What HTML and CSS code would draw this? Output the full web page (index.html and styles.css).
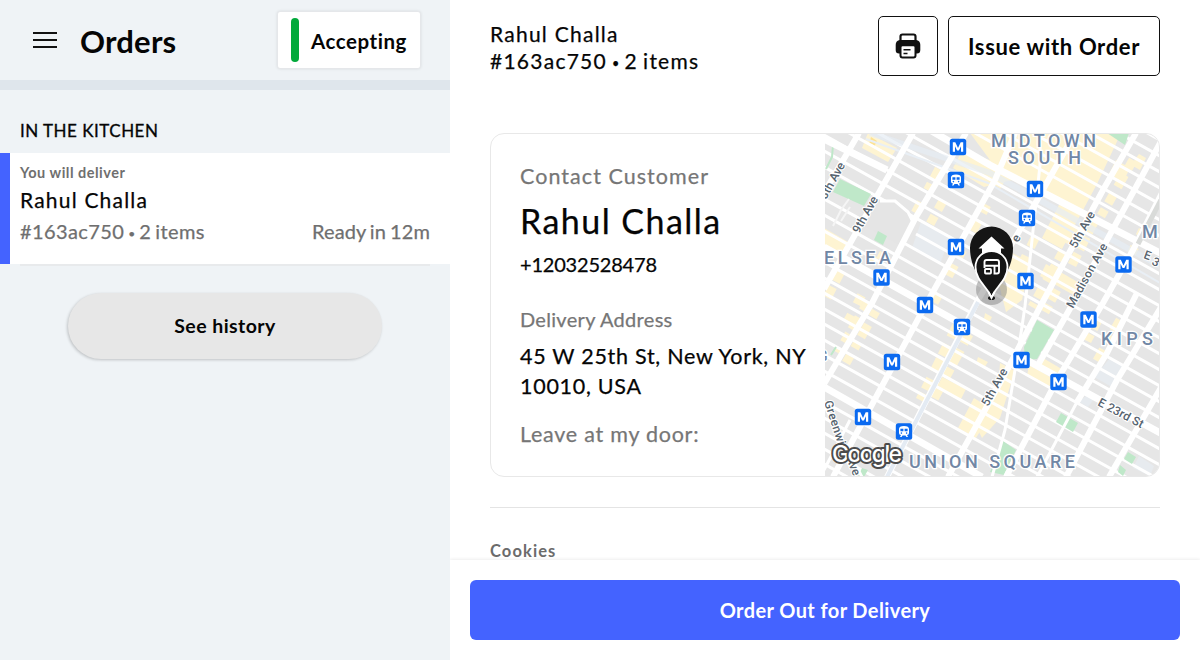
FILE: index.html
```html
<!DOCTYPE html>
<html lang="en">
<head>
<meta charset="utf-8">
<title>Orders</title>
<link rel="stylesheet" href="styles.css">
</head>
<body>
<div class="app">
  <aside class="sidebar">
    <header class="side-head">
      <svg class="menu" width="24" height="18" viewBox="0 0 24 18"><path d="M0 2H24M0 9H24M0 16H24" stroke="#111" stroke-width="2.2"/></svg>
      <h1 class="title">Orders</h1>
      <button class="status"><i class="status-bar"></i><span>Accepting</span></button>
    </header>
    <h2 class="section">IN THE KITCHEN</h2>
    <article class="order">
      <div class="order-body">
        <p class="order-kind">You will deliver</p>
        <p class="order-name">Rahul Challa</p>
        <p class="order-meta"><span class="order-id">#163ac750 <b class="dot">•</b> 2 items</span><span class="order-eta">Ready in 12m</span></p>
      </div>
    </article>
    <button class="history"><span>See history</span></button>
  </aside>
  <main class="detail">
    <div class="scroll">
      <header class="detail-head">
        <div class="who"><p class="who-name">Rahul Challa</p><p class="who-id">#163ac750 <b class="dot">•</b> 2 items</p></div>
        <button class="btn print" aria-label="Print">
          <svg width="26" height="26" viewBox="0 0 26 26"><path d="M5.500 8V3.500Q5.500 1.500 7.500 1.500H18.500Q20.500 1.500 20.500 3.500V8" fill="#fff" stroke="#111" stroke-width="2.200"/><path d="M5 7H21Q25.300 7.500 25.300 12V17Q25.300 20.500 22 20.500H4Q.7 20.500.7 17V12Q.7 7.500 5 7Z" fill="#111"/><rect x="5.500" y="12.300" width="15" height="12.200" rx="2" fill="#fff" stroke="#111" stroke-width="2"/><path d="M8.500 16.800H15.500M8.500 20.500H12.500" stroke="#111" stroke-width="1.600"/></svg>
        </button>
        <button class="btn issue"><span>Issue with Order</span></button>
      </header>
      <section class="card">
        <div class="contact">
          <p class="label l-contact">Contact Customer</p>
          <p class="cust">Rahul Challa</p>
          <p class="phone">+12032528478</p>
          <p class="label l-addr">Delivery Address</p>
          <p class="addr">45 W 25th St, New York, NY<br>10010, USA</p>
          <p class="label l-door">Leave at my door:</p>
        </div>
        <svg class="map" width="335" height="342" viewBox="825 134 335 342">
          <defs>
            <g id="metro"><rect x="-8.200" y="-8.200" width="16.400" height="16.400" rx="2.500" fill="#0b6af0"/><path d="M-5.200 4.800V-4.800H-2.700L0 1L2.700-4.800H5.200V4.800H3V-.8L.9 3.600H-.9L-3-.8V4.800Z" fill="#fff"/></g>
            <g id="train"><rect x="-8.200" y="-8.200" width="16.400" height="16.400" rx="2.500" fill="#0b6af0"/><path d="M-5-2.500Q-5-5.500 0-5.500T5-2.500V1.500Q5 3.500 3 3.500L4 5.500H2.500L1.500 4H-1.500L-2.500 5.500H-4L-3 3.500Q-5 3.500-5 1.500Z" fill="#fff"/><path d="M-3.600-2.800H-.6V-.2H-3.600ZM.6-2.800H3.600V-.2H.6Z" fill="#0b6af0"/><circle cx="-2.600" cy="1.600" r=".8" fill="#0b6af0"/><circle cx="2.600" cy="1.600" r=".8" fill="#0b6af0"/></g>
          </defs>
          <rect x="824" y="133" width="336" height="344" fill="#e6e6e6"/>
          <g fill="#fef4d2">
            <path d="M970 133H1121L1097 184L1062 249L1042 238L1060 203L1012 180L984 187L953 168L962 151L990 160Z"/>
            <path d="M868 133L897 148L888 162L862 148Z"/>
            <path d="M824 228L850 243L843 258L824 248Z"/>
            <path d="M1116 160L1130 168L1123 182L1109 174ZM1139 154L1146 158L1140 170L1131 165Z"/>
            <path d="M1046 264L1083 285L1077 297L1040 276Z"/>
            <path d="M942 377L966 389L960 401L937 388ZM1043 358L1065 371L1060 381L1037 368ZM1029 365L1054 379L1048 388L1027 376Z"/>
            <path d="M974 398L993 410L976 438L958 428ZM1010 252L1030 262L1022 300L1006 312L998 280Z"/>
            <path d="M872 254L878 258L875 264L866 260ZM978 357L988 362L984 368L976 364ZM985 313L992 317L989 323L984 319Z"/>
            <path d="M1000 363L1015 371L1000 418L982 438L977 428L998 390Z"/>
          </g>
          <path d="M871 137L877 141L874 147L869 144Z" fill="#fde293"/>
          <g fill="none" stroke="#fef4d2" stroke-width="9">
            <path d="M939 169L905 232" stroke-dasharray="12 5 7 14"/>
            <path d="M958 174L930 224" stroke-dasharray="9 22 10 7"/>
            <path d="M1003 175L934 303" stroke-dasharray="13 21 9 8"/>
            <path d="M884 253L840 336" stroke-dasharray="8 40 10 12"/>
            <path d="M868 302L838 353" stroke-dasharray="10 8 14 5"/>
            <path d="M876 311L846 363" stroke-dasharray="7 9 14 6"/>
            <path d="M957 325L920 400" stroke-dasharray="14 8 12 4"/>
            <path d="M969 334L934 399" stroke-dasharray="11 7 16 5"/>
            <path d="M1035 238L1004 300" stroke-dasharray="10 10 15 4"/>
            <path d="M1065 275L1045 312" stroke-dasharray="12 5"/>
            <path d="M1076 228L1032 307" stroke-dasharray="18 9 10 6"/>
            <path d="M1133 160L1101 216" stroke-dasharray="10 7 14 9"/>
            <path d="M1095 220L1072 265" stroke-dasharray="14 5"/>
            <path d="M1143 230L1120 277" stroke-dasharray="7 12"/>
            <path d="M1120 320L1094 366" stroke-dasharray="13 5 9 7"/>
            <path d="M1098 320L1087 341" stroke-dasharray="10 6"/>
            <path d="M841 271L827 298" stroke-dasharray="12 6"/>
          </g>
          <g fill="#e7ebef"><path d="M921 222L950 237L940 264L912 248Z"/><path d="M1111 357L1127 367L1112 387L1094 377Z"/><path d="M1087 395L1094 399L1088 407L1079 402ZM1139 456L1154 466L1150 476L1133 468Z"/></g>
          <!-- minor streets -->
          <g fill="none" stroke="#fff" stroke-width="3">
            <path d="M824-79l336 187M824-63l336 187M824-47l336 187M824-31l336 187M824-15l336 187M824 1l336 187M824 17l336 187M824 33l336 187M824 49l336 187M824 87l336 187M824 103l336 187M824 119l336 187M824 135l336 187M824 151l336 187M824 167l336 187M916 234l244 136M824 199l60 33M902 242l258 144M824 215l336 187M824 231l336 187M824 262l336 187M824 278l336 187M824 293l336 187M824 309l336 187M824 324l336 187M824 340l336 187M824 355l336 187M824 371l336 187M824 402l336 187M824 418l336 187M824 433l336 187M824 449l336 187M824 464l336 187"/>
          </g>
          <path d="M880 202L895 202L908 212L913 224L901 246L862 225Z" fill="#e5e5e5"/>
          <path d="M870 133L990 173L1160 266" fill="none" stroke="#e5ecf3" stroke-width="6" opacity=".7"/>
          <path d="M866 139L988 183L1160 283" fill="none" stroke="#e9eff5" stroke-width="2"/>
          <!-- parks -->
          <g fill="#bfe8c9">
            <path d="M840 179L871 194L864 206L833 192Z"/><path d="M878 231L887 236L883 245L874 240Z"/>
            <path d="M1107 133H1129L1125 145Z"/><path d="M1037 320L1054 330L1037 359L1025 360L1024 347Z"/>
            <path d="M1061 413L1078 423L1073 432L1056 422Z"/><path d="M1003 441L1016 450L1004 475L990 472Z"/>
            <path d="M1128 452L1136 457L1132 464L1124 459ZM1120 465L1126 470L1123 476L1118 472Z"/>
            <path d="M862 468L868 470L864 477H858Z"/>
          </g>
          <g fill="none" stroke="#bfe8c9" stroke-width="2"><path d="M833 145L832 157L826 169M836 347L831 355"/></g>
          <!-- avenues -->
          <g fill="none" stroke="#fff" stroke-width="6">
            <path d="M859 133L824 193M913 133L824 289M966 133L916 217L872 303L824 384M1015 133L995 180L923 310L833 477"/>
            <path d="M1075 133L1027 218L978 300L887 477"/>
            <path d="M1136 133L1103 190L1040 307L1007 370L948 477"/>
            <path d="M1165 134L1107 240L1072 305L1038 365M1163 191L1133 250L1103 303L1057 380L1006 477"/>
            <path d="M1137 293L1107 353L1077 402M1163 304L1117 380L1066 477M1163 384L1109 477"/>
          </g>
          <g fill="none" stroke="#fff" stroke-width="7">
            <path d="M824 139L887 170M824 387L982 477M824 247L990 340L1164 435M930 130L990 165L1164 255"/>
          </g>
          <g fill="none" stroke="#fff" stroke-width="3">
            <path d="M1040 133V165L1025 306L1020 340L1005 430L992 477M1077 402L1037 477M880 201L895 201L908 212L913 222M824 470L850 420M824 405L862 477"/>
            <path d="M833 226L841 210L849 199M841 221L850 207" stroke="#f5f5f5" stroke-width="2"/>
          </g>
          <path d="M1163 196L1138 244" fill="none" stroke="#d9dbd9" stroke-width="5"/>
          <path d="M978 302L887 477" fill="none" stroke="#e4ebf3" stroke-width="4"/>
          <g class="road">
            <text transform="translate(826 200) rotate(-61)" textLength="40">8th Ave</text>
            <text transform="translate(859 234) rotate(-61)" textLength="40">9th Ave</text>
            <text transform="translate(1018 243) rotate(-61)">e</text>
            <text transform="translate(1076 249) rotate(-61)" textLength="40">5th Ave</text>
            <text transform="translate(1073 309) rotate(-61)" textLength="72">Madison Ave</text>
            <text transform="translate(988 407) rotate(-61)" textLength="41">5th Ave</text>
            <text transform="translate(1097 405) rotate(28)" textLength="50">E 23rd St</text>
            <text transform="translate(824 402) rotate(72)" textLength="46">Greenwi</text>
            <text transform="translate(846 458) rotate(68)">Ave</text>
            <text transform="translate(1143 258) rotate(20)">E</text>
            <text transform="translate(1151 264) rotate(28)">3</text>
          </g>
          <g class="area">
            <text x="991" y="147" textLength="105">MIDTOWN</text>
            <text x="1008" y="164" textLength="73">SOUTH</text>
            <text x="824" y="264" textLength="67">ELSEA</text>
            <text x="1142" y="238">M</text>
            <text x="1101" y="345" textLength="52">KIPS</text>
            <text x="909" y="468" textLength="166">UNION SQUARE</text>
            <text x="818" y="361" font-size="14">G</text>
          </g>
          <use href="#metro" x="958" y="147"/><use href="#train" x="956" y="180"/><use href="#metro" x="1035" y="189"/><use href="#train" x="1027" y="218"/>
          <use href="#metro" x="956" y="247"/><use href="#metro" x="881.500" y="277.500"/><use href="#metro" x="925" y="305"/><use href="#metro" x="1025.500" y="281"/>
          <use href="#metro" x="1123.500" y="264.500"/><use href="#metro" x="1088.500" y="319.500"/><use href="#train" x="962" y="327"/><use href="#metro" x="892" y="362"/>
          <use href="#metro" x="1021.500" y="360"/><use href="#metro" x="1058.500" y="382"/><use href="#metro" x="863" y="417"/><use href="#train" x="904" y="431.500"/>
          <circle cx="991.500" cy="289.500" r="15.500" fill="#777" opacity=".45"/>
          <path d="M991.500 299C988 286 970 273 970 248A21.500 21.500 0 0 1 1013 248C1013 273 995 286 991.500 299Z" fill="#151515"/>
          <path d="M991.500 236.500L1004.500 248.500H1001V258H982V248.500H978.500Z" fill="#fff"/>
          <path d="M991.500 298C989 288 975.500 281 975.500 267A16 16 0 0 1 1007.500 267C1007.500 281 994 288 991.500 298Z" fill="#151515" stroke="#fff" stroke-width="1.800"/>
          <path d="M984.500 268V262Q984.500 260 986.500 260H997Q999 260 999 262V271.500Q999 273.500 997 273.500H994.500V266M984.500 265.700H999" fill="none" stroke="#fff" stroke-width="1.900"/>
          <rect x="985" y="269" width="6" height="4.500" rx=".8" fill="none" stroke="#fff" stroke-width="1.800"/>
          <ellipse cx="991.500" cy="298" rx="3.500" ry="2" fill="#111"/><path d="M988.500 292L991.500 298L994.500 292" fill="none" stroke="#fff" stroke-width="1.800"/>
          <text class="google" x="832" y="462" textLength="70">Google</text>
        </svg>
      </section>
      <hr class="rule">
      <p class="item">Cookies</p>
    </div>
    <footer class="foot"><button class="primary"><span>Order Out for Delivery</span></button></footer>
  </main>
</div>
</body>
</html>
```
FILE: styles.css
```css
* { box-sizing: border-box; }
body { margin: 0; font-family: Lato, "Liberation Sans", sans-serif; color: #050505; background: #fff; }
p, h1, h2 { margin: 0; white-space: nowrap; }
p { -webkit-text-stroke: .25px currentColor; }
button { font: inherit; color: inherit; margin: 0; padding: 0; white-space: nowrap; }
.app { display: flex; width: 1200px; height: 660px; overflow: hidden; }
.dot { font-size: .6em; font-weight: 400; letter-spacing: 0; position: relative; top: -.12em; }

.sidebar { width: 450px; background: #eff3f6; }
.side-head { display: flex; align-items: center; height: 90px; padding: 0 29px 1px 33px; border-bottom: 10px solid #dfe6ec; }
.menu { flex: none; }
.title { margin-left: 23px; font-size: 31px; line-height: 40px; font-weight: 700; padding-top: 2px; letter-spacing: .2px; }
.status { display: flex; align-items: center; gap: 12px; width: 144px; height: 58px; margin-left: auto; padding-left: 13px; border: 1px solid #e5e7ea; border-radius: 3px; background: #fff; box-shadow: 0 0 3px rgba(0,0,0,.1); font-size: 20.500px; font-weight: 700; letter-spacing: .55px; }
.status span { padding-top: 2px; }
.status-bar { width: 8px; height: 44px; border-radius: 4px; background: #02a93b; }
.section { height: 62px; margin: 0 20px; padding-top: 29px; font-size: 17px; line-height: 24px; font-weight: 400; letter-spacing: .5px; -webkit-text-stroke: .3px currentColor; }
.order { height: 111px; margin-top: 1px; border-left: 10px solid #4463ff; background: #fff; }
.order-body { margin: 0 20px 0 10px; height: 113px; border-bottom: 2px solid #e8eaec; padding-top: 10px; }
.order-kind { font-size: 14.500px; line-height: 20px; font-weight: 700; color: #6f6f6f; letter-spacing: .5px; -webkit-text-stroke: 0; }
.order-name { padding-top: 3px; font-size: 21px; line-height: 28px; letter-spacing: 1.200px; }
.order-meta { display: flex; justify-content: space-between; margin-top: 3px; font-size: 20px; line-height: 28px; color: #6f6f6f; letter-spacing: .4px; word-spacing: -1.500px; }
.order-eta { letter-spacing: .15px; }
.history { display: block; width: 314px; height: 66px; margin: 29px 0 0 68px; padding-bottom: 2px; border: 0; border-radius: 33px; background: #e7e7e7; box-shadow: -1px 1px 3px rgba(0,0,0,.2); font-size: 19.500px; font-weight: 700; letter-spacing: .45px; }

.detail { width: 750px; display: flex; flex-direction: column; }
.scroll { height: 560px; overflow: hidden; padding: 16px 40px 0; }
.detail-head { display: flex; height: 60px; }
.who { flex: 1; padding-top: 4px; font-size: 21px; line-height: 28px; letter-spacing: 1.250px; }
.who-id { margin-top: -1px; word-spacing: -1.500px; }
.btn { display: grid; place-items: center; height: 60px; border: 1.500px solid #111; border-radius: 5px; background: #fff; }
.print { width: 60px; }
.issue { width: 212px; margin-left: 10px; font-size: 22px; font-weight: 700; letter-spacing: .65px; }
.card { display: flex; width: 670px; height: 344px; margin-top: 57px; border: 1px solid #e8e8e8; border-radius: 14px; overflow: hidden; }
.contact { width: 334px; flex: none; padding: 28px 0 0 29px; letter-spacing: .8px; }
.map { flex: none; display: block; }
.label { color: #767676; }
.l-contact { font-size: 21.500px; line-height: 28px; letter-spacing: 1.050px; }
.cust { margin-top: 9px; font-size: 34px; line-height: 44px; letter-spacing: 1.450px; }
.phone { margin-top: 7px; font-size: 20px; line-height: 28px; letter-spacing: -.2px; }
.l-addr { margin-top: 27px; font-size: 20px; line-height: 28px; letter-spacing: .3px; }
.addr { margin-top: 8px; font-size: 21.500px; line-height: 30px; letter-spacing: .72px; }
.l-door { margin-top: 18px; font-size: 21.500px; line-height: 30px; letter-spacing: .75px; }
.rule { height: 1px; margin: 30px 0 0; border: 0; background: #e4e4e4; }
.item { margin-top: 33px; font-size: 16.500px; line-height: 20px; font-weight: 700; color: #6b6b6b; letter-spacing: 1.100px; -webkit-text-stroke: 0; }
.foot { position: relative; height: 100px; padding: 20px; background: #fff; box-shadow: 0 -1px 3px rgba(0,0,0,.07); clip-path: inset(-6px 0 0 0); }
.primary { width: 710px; height: 60px; border: 0; border-radius: 6px; background: #4463ff; color: #fff; font-size: 20px; font-weight: 700; letter-spacing: .4px; }

.road { font: 500 12px Roboto, sans-serif; fill: #57646f; stroke: #fff; stroke-width: 2px; paint-order: stroke; }
.area { font: 500 18px Roboto, sans-serif; fill: #7187a5; stroke: #fff; stroke-width: 2.500px; paint-order: stroke; }
.google { font: 500 23px Inter, Lato, sans-serif; fill: #fff; stroke: #4b4b4b; stroke-width: 4px; stroke-linejoin: round; paint-order: stroke; }
```
